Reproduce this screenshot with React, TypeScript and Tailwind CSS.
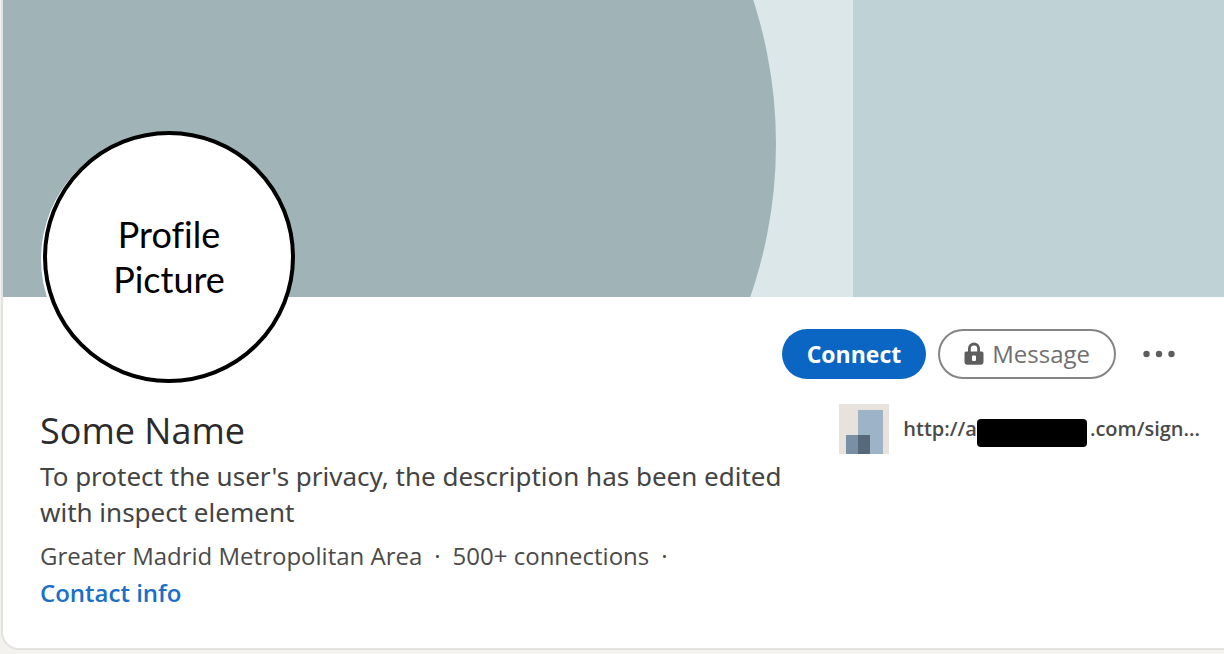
function Cover() {
  return (
    <svg
      className="block h-[297px] w-full"
      viewBox="0 0 1221 297"
      preserveAspectRatio="xMinYMin slice"
      aria-hidden="true"
    >
      <rect width="1221" height="297" fill="#dbe7e9" />
      <rect x="850" width="371" height="297" fill="#bfd3d6" />
      <circle cx="306" cy="144" r="467" fill="#a0b4b7" />
    </svg>
  );
}

function LockIcon() {
  return (
    <svg className="h-6 w-5 shrink-0" viewBox="0 0 20 24" aria-hidden="true">
      <path d="M5.4 11V6.6a4.6 4.6 0 0 1 9.2 0V11" fill="none" stroke="#5e5e5e" strokeWidth="2.8" />
      <path
        fillRule="evenodd"
        fill="#5e5e5e"
        d="M2.2 9.5h15.6a1.7 1.7 0 0 1 1.7 1.7v8.6a3 3 0 0 1-3 3h-13a3 3 0 0 1-3-3v-8.6a1.7 1.7 0 0 1 1.7-1.7ZM9 13.5a1 1 0 0 0-1 1v3.4a1 1 0 0 0 1 1h2a1 1 0 0 0 1-1v-3.4a1 1 0 0 0-1-1Z"
      />
    </svg>
  );
}

function MoreIcon() {
  return (
    <svg className="h-2 w-8" viewBox="0 0 32 8" fill="#5e5e5e" aria-hidden="true">
      <circle cx="3.5" cy="4" r="3.2" />
      <circle cx="16" cy="4" r="3.2" />
      <circle cx="28.5" cy="4" r="3.2" />
    </svg>
  );
}

function SiteThumbnail() {
  return (
    <svg className="size-[50px] shrink-0" viewBox="0 0 50 50" aria-hidden="true">
      <rect width="50" height="50" fill="#e7e2dc" />
      <rect x="19" y="6" width="25" height="44" fill="#9db3c8" />
      <rect x="7" y="31" width="12" height="19" fill="#788fa5" />
      <rect x="19" y="31" width="12" height="19" fill="#56687a" />
    </svg>
  );
}

export default function App() {
  return (
    <div className="min-h-screen bg-[#f3f2ef] pb-1 pl-[3px] font-['Open_Sans','Noto_Sans',sans-serif]">
      <main className="overflow-hidden rounded-bl-2xl bg-white pb-9 shadow-[0_0_0_2px_#e4e2de]">
        <Cover />

        <div className="flex items-start justify-between px-10">
          <div className="-mt-[166px] flex size-[252px] items-center justify-center rounded-full border-4 border-black bg-white text-center font-['Lato',sans-serif] text-[36px] leading-[45px] text-black shadow-[-2px_2px_0_#fff] [font-variant-ligatures:none]">
            Profile
            <br />
            Picture
          </div>
          <div className="mt-8 flex items-center">
            <button className="h-[50px] rounded-full bg-[#0a66c2] px-[25px] text-[23px] font-bold text-white">
              Connect
            </button>
            <button className="ml-3 flex h-[50px] items-center gap-2 rounded-full border-2 border-[#858585] px-6 text-[24px] font-medium text-[#707070]">
              <LockIcon />
              Message
            </button>
            <button className="ml-[18px] flex size-[50px] items-center justify-center" aria-label="More actions">
              <MoreIcon />
            </button>
          </div>
        </div>

        <div className="flex items-start justify-between pl-[37px] pr-6 pt-5">
          <section className="w-[760px]">
            <h1 className="text-[36px] leading-[55px] text-[#2b2b2b]">Some Name</h1>
            <p className="font-['Noto_Sans',sans-serif] text-[26px] leading-9 text-[#444444]">
              To protect the user's privacy, the description has been edited with inspect element
            </p>
            <p className="mt-2 flex gap-3 text-[24px] leading-9 text-[#4a4a4a]">
              <span>Greater Madrid Metropolitan Area</span>
              <span>·</span>
              <span>500+ connections</span>
              <span>·</span>
            </p>
            <a href="#contact" className="block text-[24px] font-semibold leading-[38px] text-[#1a6fc6]">
              Contact info
            </a>
          </section>
          <a href="#website" className="mt-px flex items-center text-[20px] font-semibold text-[#4a4a4a]">
            <SiteThumbnail />
            <span className="ml-[14px]">http://a</span>
            <span className="mt-2 h-7 w-[110px] rounded-sm bg-black" />
            <span className="pl-[3px]">.com/sign...</span>
          </a>
        </div>
      </main>
    </div>
  );
}
